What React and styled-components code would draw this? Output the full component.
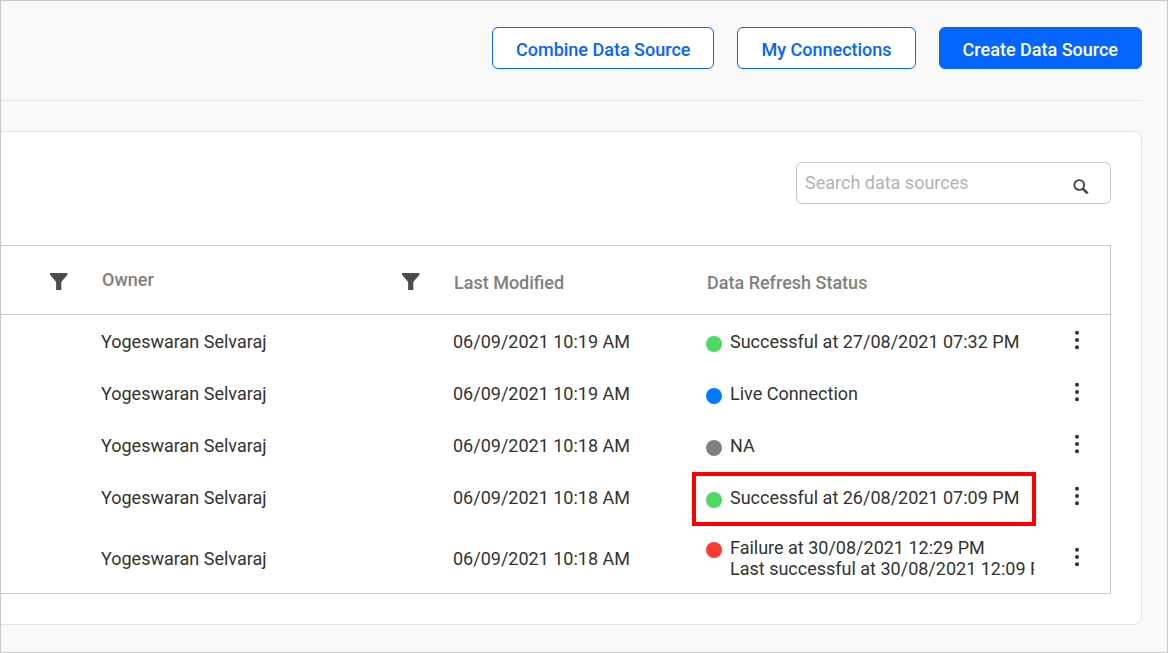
import React from "react";
import styled, { createGlobalStyle, css } from "styled-components";

const GlobalStyle = createGlobalStyle`
  *, *::before, *::after { box-sizing: border-box; }
  body {
    margin: 0;
    background: #f9f9f9;
    color: #333;
    font-family: Roboto, "Liberation Sans", sans-serif;
    font-size: 18px;
    line-height: 21px;
  }
`;

const Page = styled.main`
  min-height: 100vh;
  padding: 0 25px 27px 0;
  border: 1px solid #c8c8c8;
`;

const Toolbar = styled.header`
  display: flex;
  justify-content: flex-end;
  gap: 23px;
  padding: 26px 0 31px;
  margin-bottom: 30px;
  border-bottom: 1px solid #e5e5e5;
`;

const Button = styled.button`
  height: 42px;
  padding: 2px 23px 0;
  border: 1px solid #0565ff;
  border-radius: 6px;
  background: ${(p) => (p.$primary ? "#0565ff" : "#fff")};
  color: ${(p) => (p.$primary ? "#fff" : "#0565ff")};
  font: inherit;
  font-weight: 500;
  white-space: nowrap;
  cursor: pointer;
`;

const Card = styled.section`
  padding: 30px 30px 30px 0;
  border: 1px solid #e5e5e5;
  border-left: 0;
  border-radius: 0 8px 8px 0;
  background: #fff;
`;

const SearchBox = styled.form`
  display: flex;
  align-items: center;
  width: 315px;
  height: 42px;
  margin: 0 0 41px auto;
  padding: 0 21px 0 8px;
  border: 1px solid #c8c8c8;
  border-radius: 6px;
`;

const SearchInput = styled.input`
  flex: 1;
  min-width: 0;
  padding: 0 0 2px;
  border: 0;
  outline: 0;
  background: none;
  color: #333;
  font: inherit;
  &::placeholder { color: #b3b3b3; opacity: 1; }
`;

const IconButton = styled.button`
  display: inline-flex;
  align-items: center;
  justify-content: center;
  padding: 0;
  border: 0;
  background: none;
  color: ${(p) => p.$color || "#333"};
  cursor: pointer;
`;

const SearchButton = styled(IconButton)`
  padding-top: 8px;
`;

const FilterButton = styled(IconButton)`
  padding-top: 4px;
`;

const Table = styled.table`
  width: 100%;
  table-layout: fixed;
  border-collapse: separate;
  border-spacing: 0;
  border: 1px solid #c8c8c8;
  border-left: 0;
`;

const Col = styled.col`
  width: ${(p) => p.$width};
`;

const HeadCell = styled.th`
  height: 69px;
  padding: ${(p) => (p.$plain ? "4px 17px 0" : "0 17px 2px")};
  border-bottom: 1px solid #c8c8c8;
  color: #808080;
  font-weight: 500;
  text-align: left;
`;

const HeadContent = styled.div`
  display: flex;
  align-items: center;
  justify-content: ${(p) => (p.$end ? "flex-end" : "space-between")};
`;

const Cell = styled.td`
  position: relative;
  height: ${(p) => (p.$tall ? "70px" : "52px")};
  padding: 0 9px 0 16px;
  white-space: nowrap;

  ${(p) =>
    p.$highlighted &&
    css`
      &::after {
        content: "";
        position: absolute;
        inset: 1px 7px -3px 2px;
        border: 4px solid #f00;
        pointer-events: none;
      }
    `}
`;

const ActionCell = styled(Cell)`
  padding: 2px 0 0;
  text-align: center;
`;

const Status = styled.div`
  display: flex;
  align-items: flex-start;
  gap: 8px;
  overflow: hidden;
`;

const dotColors = {
  success: "#4cd964",
  live: "#007aff",
  none: "#808080",
  failure: "#ff3b30",
};

const Dot = styled.span`
  flex: none;
  width: 16px;
  height: 16px;
  margin-top: 5px;
  border-radius: 50%;
  background: ${(p) => dotColors[p.$kind]};
`;

const StatusLine = styled.div``;

const FilterIcon = () => (
  <svg width="18" height="17" viewBox="0 0 18 17" aria-hidden="true">
    <path d="M0 0H17.4V1.8L11.3 9V17H6.1V9L0 1.8Z" fill="currentColor" />
  </svg>
);

const SearchIcon = () => (
  <svg width="16" height="16" viewBox="0 0 16 16" fill="none" stroke="currentColor" aria-hidden="true">
    <circle cx="6.2" cy="6" r="4.9" strokeWidth="1.9" />
    <path d="M9.6 9.4L14.6 14.4" strokeWidth="2.5" />
  </svg>
);

const MoreIcon = () => (
  <svg width="6" height="20" viewBox="0 0 6 20" fill="currentColor" aria-hidden="true">
    <circle cx="3" cy="2.7" r="2" />
    <circle cx="3" cy="10" r="2" />
    <circle cx="3" cy="17.3" r="2" />
  </svg>
);

const rows = [
  { modified: "06/09/2021 10:19 AM", kind: "success", lines: ["Successful at 27/08/2021 07:32 PM"] },
  { modified: "06/09/2021 10:19 AM", kind: "live", lines: ["Live Connection"] },
  { modified: "06/09/2021 10:18 AM", kind: "none", lines: ["NA"] },
  { modified: "06/09/2021 10:18 AM", kind: "success", lines: ["Successful at 26/08/2021 07:09 PM"], highlighted: true },
  {
    modified: "06/09/2021 10:18 AM",
    kind: "failure",
    lines: ["Failure at 30/08/2021 12:29 PM", "Last successful at 30/08/2021 12:09 PM"],
  },
];

export default function App() {
  return (
    <>
      <GlobalStyle />
      <Page>
        <Toolbar>
          <Button type="button">Combine Data Source</Button>
          <Button type="button">My Connections</Button>
          <Button type="button" $primary>Create Data Source</Button>
        </Toolbar>
        <Card>
          <SearchBox role="search" onSubmit={(e) => e.preventDefault()}>
            <SearchInput type="text" aria-label="Search data sources" placeholder="Search data sources" />
            <SearchButton type="submit" aria-label="Search" $color="#444">
              <SearchIcon />
            </SearchButton>
          </SearchBox>
          <Table>
            <colgroup>
              <Col $width="84px" />
              <Col $width="352px" />
              <Col $width="253px" />
              <Col $width="auto" />
              <Col $width="67px" />
            </colgroup>
            <thead>
              <tr>
                <HeadCell>
                  <HeadContent $end>
                    <FilterButton type="button" aria-label="Filter by category" $color="#4d4d4d">
                      <FilterIcon />
                    </FilterButton>
                  </HeadContent>
                </HeadCell>
                <HeadCell scope="col">
                  <HeadContent>
                    Owner
                    <FilterButton type="button" aria-label="Filter by owner" $color="#4d4d4d">
                      <FilterIcon />
                    </FilterButton>
                  </HeadContent>
                </HeadCell>
                <HeadCell scope="col" $plain>Last Modified</HeadCell>
                <HeadCell scope="col" $plain>Data Refresh Status</HeadCell>
                <HeadCell />
              </tr>
            </thead>
            <tbody>
              {rows.map((row, i) => {
                const tall = row.lines.length > 1;
                return (
                  <tr key={i}>
                    <Cell $tall={tall} />
                    <Cell>Yogeswaran Selvaraj</Cell>
                    <Cell>{row.modified}</Cell>
                    <Cell $highlighted={row.highlighted}>
                      <Status>
                        <Dot $kind={row.kind} />
                        <div>
                          {row.lines.map((line) => (
                            <StatusLine key={line}>{line}</StatusLine>
                          ))}
                        </div>
                      </Status>
                    </Cell>
                    <ActionCell>
                      <IconButton type="button" aria-label="More actions">
                        <MoreIcon />
                      </IconButton>
                    </ActionCell>
                  </tr>
                );
              })}
            </tbody>
          </Table>
        </Card>
      </Page>
    </>
  );
}
